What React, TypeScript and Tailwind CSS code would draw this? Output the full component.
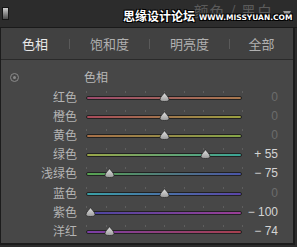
import React from "react";

interface Row {
  label: string;
  value: number;
  from: string;
  to: string;
}

const rows: Row[] = [
  { label: "红色", value: 0, from: "#9c4a6c", to: "#a8784e" },
  { label: "橙色", value: 0, from: "#a84a5a", to: "#9aa040" },
  { label: "黄色", value: 0, from: "#a87048", to: "#86a648" },
  { label: "绿色", value: 55, from: "#9aa648", to: "#3aa496" },
  { label: "浅绿色", value: -75, from: "#58a450", to: "#4a54a8" },
  { label: "蓝色", value: 0, from: "#3aa0a6", to: "#5a44a8" },
  { label: "紫色", value: -100, from: "#4a46a0", to: "#9a3e96" },
  { label: "洋红", value: -74, from: "#7a3ea6", to: "#a6404e" },
];

const ticks = [0, 1, 2, 3, 4, 5, 6, 7, 8];

const outline =
  "[text-shadow:1px_1px_0_#000,-1px_-1px_0_#000,1px_-1px_0_#000,-1px_1px_0_#000]";

const Slider = ({ row }: { row: Row }) => {
  const pos = 78 + (row.value / 100) * 74;
  return (
    <div className="relative w-[156px] h-[12px]">
      <div className="absolute left-0 right-0 top-0 h-[3px]">
        {ticks.map((t) => (
          <div
            key={t}
            className="absolute top-0 w-px h-[2px] bg-[#5e5e5e]"
            style={{ left: t * 19.5 }}
          />
        ))}
      </div>
      <div
        className="absolute left-0 right-0 top-[5px] h-[4px] rounded-full border border-[#222]"
        style={{ background: `linear-gradient(to right, ${row.from}, ${row.to})` }}
      />
      <svg
        className="absolute top-[1px]"
        style={{ left: pos - 5 }}
        width="11"
        height="10"
        viewBox="0 0 11 10"
      >
        <defs>
          <linearGradient id="th" x1="0" y1="0" x2="0" y2="1">
            <stop offset="0" stopColor="#e4e4e4" />
            <stop offset="1" stopColor="#9a9a9a" />
          </linearGradient>
        </defs>
        <path
          d="M5.5 0.5 C6.5 2.5 10 5 10 7.5 C10 9 8.5 9.5 5.5 9.5 C2.5 9.5 1 9 1 7.5 C1 5 4.5 2.5 5.5 0.5 Z"
          fill="url(#th)"
          stroke="#2a2a2a"
          strokeWidth="0.8"
        />
      </svg>
    </div>
  );
};

const formatValue = (v: number) => {
  if (v === 0) return "0";
  if (v > 0) return `+ ${v}`;
  return `− ${Math.abs(v)}`;
};

export default function App() {
  return (
    <div
      className="w-[297px] h-[247px] bg-[#2c2c2c] overflow-hidden"
      style={{ fontFamily: '"Noto Sans CJK SC", "Noto Sans", sans-serif' }}
    >
      <div className="relative h-[28px] flex items-center border-b border-[#1a1a1a]">
        <div className="ml-[2px] w-[7px] h-[13px] border border-[#151515] bg-gradient-to-b from-[#cfcfcf] via-[#8a8a8a] to-[#4a4a4a]" />
        <div className="ml-auto mr-[24px] self-start mt-[2px] text-[15px] leading-[18px] text-[#5a5a5a] tracking-[1px] whitespace-nowrap">
          颜色 / 黑白
        </div>
        <svg className="absolute right-[6px] top-[11px]" width="8" height="7" viewBox="0 0 8 7">
          <path d="M0 0 H8 L4 7 Z" fill="#9a9a9a" />
        </svg>
        <div className="absolute left-[123px] top-[7px] flex items-end gap-[4px] whitespace-nowrap">
          <span className={`text-[12px] font-bold text-white leading-[18px] ${outline}`}>
            思缘设计论坛
          </span>
          <span
            className={`text-[7.5px] font-bold text-white leading-[14px] ${outline}`}
            style={{ fontFamily: '"DejaVu Sans", sans-serif' }}
          >
            WWW.MISSYUAN.COM
          </span>
        </div>
      </div>

      <div className="mr-[2px] border-l border-r-2 border-b-2 border-[#1c1c1c]">
        <div className="h-[32px] bg-[#414141] border-b border-[#2a2a2a] flex items-center text-[13px]">
          <div className="w-[68px] text-center text-[#e8e8e8]">色相</div>
          <div className="w-px h-[10px] bg-[#5a5a5a]" />
          <div className="w-[79px] text-center text-[#b0b0b0]">饱和度</div>
          <div className="w-px h-[10px] bg-[#5a5a5a]" />
          <div className="w-[79px] text-center text-[#b0b0b0]">明亮度</div>
          <div className="w-px h-[10px] bg-[#5a5a5a]" />
          <div className="flex-1 text-center text-[#b0b0b0]">全部</div>
        </div>

        <div className="h-[183px] bg-[#474747] pt-[7px]">
          <div className="flex items-center h-[20px]">
            <div className="ml-[9px] w-[9px] h-[9px] rounded-full border border-[#8a8a8a] flex items-center justify-center">
              <div className="w-[3px] h-[3px] rounded-full bg-[#8a8a8a]" />
            </div>
            <div className="ml-[65px] text-[12px] text-[#b8b8b8]">色相</div>
          </div>
          <div className="flex flex-col">
            {rows.map((row) => (
              <div key={row.label} className="flex items-center h-[19.2px]">
                <div className="w-[76px] text-right text-[12px] text-[#b4b4b4] leading-none">
                  {row.label}
                </div>
                <div className="ml-[9px]">
                  <Slider row={row} />
                </div>
                <div
                  className={`w-[36px] text-right text-[12px] leading-none ${
                    row.value === 0 ? "text-[#6c6c6c]" : "text-[#d4d4d4]"
                  }`}
                  style={{ fontFamily: '"Liberation Sans", sans-serif' }}
                >
                  {formatValue(row.value)}
                </div>
              </div>
            ))}
          </div>
        </div>
      </div>
    </div>
  );
}
